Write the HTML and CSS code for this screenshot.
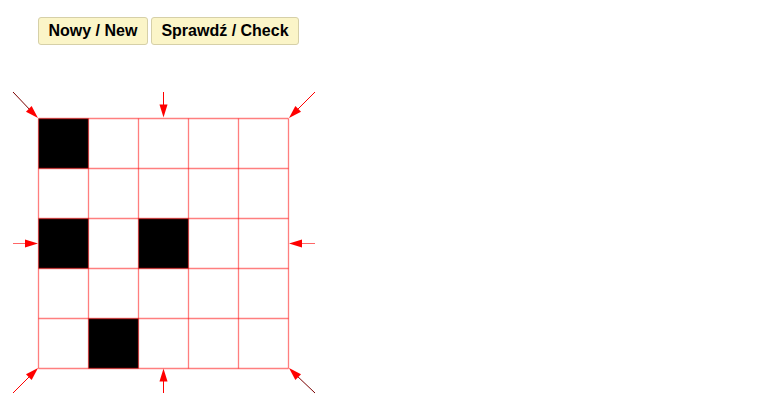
FILE: index.html
```html
<!DOCTYPE html>
<html>
<head>
<meta charset="utf-8">
<link rel="stylesheet" href="styles.css">
</head>
<body>
<div class="toolbar">
  <button class="btn">Nowy / New</button>
  <button class="btn">Sprawdź / Check</button>
</div>
<svg class="board" width="340" height="325" viewBox="0 0 340 325">
  <g fill="#000">
    <rect x="38.5" y="38.5" width="50" height="50"/>
    <rect x="38.5" y="138.5" width="50" height="50"/>
    <rect x="138.5" y="138.5" width="50" height="50"/>
    <rect x="88.5" y="238.5" width="50" height="50"/>
  </g>
  <g stroke="rgba(255,0,0,0.5)" stroke-width="1.3" fill="none">
    <path d="M38.5 38.5V288.5M88.5 38.5V288.5M138.5 38.5V288.5M188.5 38.5V288.5M238.5 38.5V288.5M288.5 38.5V288.5"/>
    <path d="M38.5 38.5H288.5M38.5 88.5H288.5M38.5 138.5H288.5M38.5 188.5H288.5M38.5 238.5H288.5M38.5 288.5H288.5"/>
  </g>
  <g stroke-width="1">
    <line x1="13" y1="12" x2="32" y2="32" stroke="#7a0000"/>
    <line x1="315" y1="12" x2="295" y2="32" stroke="#f00"/>
    <line x1="13" y1="313" x2="32" y2="294" stroke="#f00"/>
    <line x1="315" y1="313" x2="295" y2="294" stroke="#7a0000"/>
    <line x1="163.5" y1="12" x2="163.5" y2="26" stroke="#f00"/>
    <line x1="163.5" y1="313" x2="163.5" y2="300" stroke="#f00"/>
    <line x1="13" y1="163.5" x2="26" y2="163.5" stroke="#f66"/>
    <line x1="315" y1="163.5" x2="301" y2="163.5" stroke="#f66"/>
  </g>
  <g fill="#f00">
    <polygon points="38,38 25.97,31.63 31.63,25.97"/>
    <polygon points="289,38 301.03,31.63 295.37,25.97"/>
    <polygon points="38,288 31.63,300.03 25.97,294.37"/>
    <polygon points="289,288 301.03,294.37 295.37,300.03"/>
    <polygon points="163.5,37.5 159.5,24.5 167.5,24.5"/>
    <polygon points="163.5,288.5 159.5,301.5 167.5,301.5"/>
    <polygon points="38,163.5 25,159.5 25,167.5"/>
    <polygon points="289,163.5 302,159.5 302,167.5"/>
  </g>
</svg>
</body>
</html>
```

FILE: styles.css
```css
html, body {
  margin: 0;
  padding: 0;
  background: #fff;
}
body {
  font-family: "Liberation Sans", Arial, sans-serif;
}
.toolbar {
  display: flex;
  gap: 3px;
  padding: 17px 0 0 38px;
  height: 28px;
}
.btn {
  font-family: "Liberation Sans", Arial, sans-serif;
  font-weight: bold;
  font-size: 16px;
  color: #000;
  background: #fbf5c8;
  border: 1px solid #d6d0a8;
  border-radius: 3px;
  padding: 0 9.5px;
  height: 28px;
  margin: 0;
  line-height: 26px;
}
.board {
  display: block;
  margin-top: 35px;
}
```
